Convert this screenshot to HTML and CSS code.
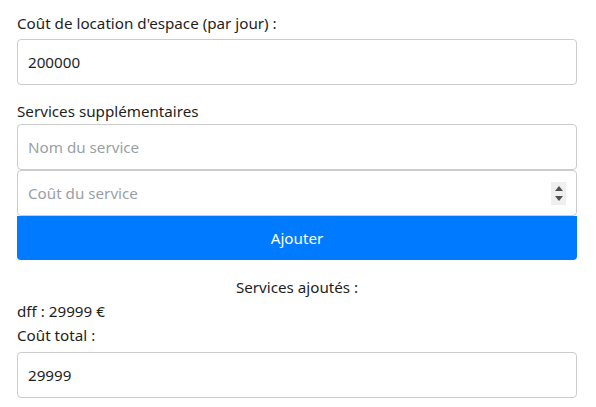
FILE: index.html
```html
<!DOCTYPE html>
<html lang="fr">
<head>
<meta charset="utf-8">
<title>Location</title>
<link rel="stylesheet" href="styles.css">
</head>
<body>
<div class="page">
  <label class="label first">Coût de location d'espace (par jour) :</label>
  <div class="field">200000</div>

  <label class="label second">Services supplémentaires</label>
  <div class="group">
    <div class="field placeholder">Nom du service</div>
    <div class="field placeholder spin-field">Coût du service
      <span class="spinner"><span class="tri up"></span><span class="tri down"></span></span>
    </div>
    <button class="btn">Ajouter</button>
  </div>

  <div class="added-title">Services ajoutés :</div>
  <div class="line">dff : 29999 €</div>
  <div class="line">Coût total :</div>
  <div class="field total">29999</div>
</div>
</body>
</html>
```
FILE: styles.css
```css
* { box-sizing: border-box; }
html, body { margin: 0; background: #fff; }
body {
  font-family: "Noto Sans", "Open Sans", sans-serif;
  font-size: 15.2px;
  line-height: 24px;
  color: #1e1e1e;
}
.page {
  width: 560px;
  margin-left: 17px;
  padding-top: 11px;
  display: flex;
  flex-direction: column;
}
.label { display: block; }
.label.first { margin-bottom: 4px; }
.label.second { margin-top: 14px; margin-bottom: 1px; }
.field {
  height: 46px;
  border: 1px solid #ccc;
  border-radius: 4px;
  padding: 10px 10px;
  background: #fff;
  position: relative;
}
.placeholder { color: #9a9fa6; }
.group { display: flex; flex-direction: column; }
.spinner {
  position: absolute;
  right: 10px;
  top: 11px;
  width: 15px;
  height: 23px;
  background: #efefef;
  display: flex;
  flex-direction: column;
  align-items: center;
  justify-content: center;
  gap: 5px;
}
.tri { width: 0; height: 0; border-left: 4px solid transparent; border-right: 4px solid transparent; }
.tri.up { border-bottom: 5px solid #505050; }
.tri.down { border-top: 5px solid #505050; }
.btn {
  height: 44px;
  border: 0;
  border-radius: 0 0 4px 4px;
  background: #007bff;
  color: #fff;
  font: inherit;
  padding: 0;
}
.added-title { text-align: center; margin-top: 15px; }
.field.total { margin-top: 5px; }
```
